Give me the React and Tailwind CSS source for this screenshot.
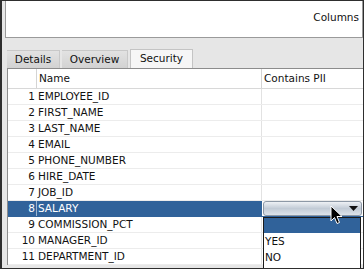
import React from 'react';

const ROWS = [
  'EMPLOYEE_ID', 'FIRST_NAME', 'LAST_NAME', 'EMAIL', 'PHONE_NUMBER', 'HIRE_DATE',
  'JOB_ID', 'SALARY', 'COMMISSION_PCT', 'MANAGER_ID', 'DEPARTMENT_ID',
];

const font = { fontFamily: '"DejaVu Sans", Verdana, sans-serif' };

function ComboBox() {
  return (
    <div className="flex-1 h-[15px] mx-[1px] rounded-[3px] border border-[#8d98a6] bg-gradient-to-b from-[#eef1f5] via-[#c2cbd6] to-[#dde3ea] flex items-center justify-end pr-[3px]">
      <svg width="9" height="5" viewBox="0 0 9 5"><path d="M0 0h9L4.5 5z" fill="#111" /></svg>
    </div>
  );
}

export default function App() {
  return (
    <div className="w-[364px] h-[269px] overflow-hidden relative bg-[#e6e6e6] border border-[#2e2e2e] border-l-2 text-[10.5px] text-[#111]" style={font}>
      {/* Columns header panel */}
      <div className="ml-[3px] h-[37px] bg-white border border-t-0 border-[#9a9a9a] flex items-center justify-end pr-[3px] pb-[2px]">
        <span>Columns</span>
      </div>

      {/* Tabs */}
      <div className="mt-[11px] h-[19px] pl-[5px] flex items-end gap-[2px]">
        <div className="w-[53px] h-[18px] bg-gradient-to-b from-[#e2e2e2] to-[#d2d2d2] border-t border-r border-[#c8c8c8] flex items-center justify-center">Details</div>
        <div className="w-[66px] h-[18px] bg-gradient-to-b from-[#e2e2e2] to-[#d2d2d2] border-t border-r border-[#c8c8c8] flex items-center justify-center">Overview</div>
        <div className="w-[63px] h-[19px] bg-[#f6f6f6] border-t border-r border-l border-[#c4c4c4] flex items-center justify-center">Security</div>
      </div>

      {/* Table */}
      <div className="ml-[5px] bg-white border-l border-t border-[#8c8c8c] relative">
        <div className="flex h-[20px] border-b border-[#d8d8d8]">
          <div className="w-[29px] border-r border-[#d4d4d4]" />
          <div className="w-[225px] border-r border-[#d4d4d4] flex items-center pl-[2px]">Name</div>
          <div className="flex-1 flex items-center pl-[2px]">Contains PII</div>
        </div>
        {ROWS.map((name, i) => {
          const sel = i === 7;
          return (
            <div key={name} className={`flex h-[16px] border-b ${sel ? 'border-[#30629a]' : 'border-[#ececec]'}`}>
              <div className={`w-[29px] flex items-center justify-end pr-[1px] border-r ${sel ? 'bg-[#30629a] text-white border-[#9db4cf]' : 'border-white'}`}>{i + 1}</div>
              <div className={`w-[225px] flex items-center pl-[1px] border-r ${sel ? 'bg-[#30629a] text-white border-[#30629a]' : 'border-[#e2e2e2]'}`}>{name}</div>
              <div className="flex-1 flex items-center">{sel && <ComboBox />}</div>
            </div>
          );
        })}

        {/* Combo popup list */}
        <div className="absolute left-[255px] top-[148px] w-[98px] h-[52px] bg-white border border-[#1a1a1a]">
          <div className="h-[15px] bg-[#30629a]" />
          <div className="h-[16px] flex items-center pl-[1px] mt-[1px]">YES</div>
          <div className="h-[16px] flex items-center pl-[1px]">NO</div>
        </div>
      </div>

      {/* Mouse cursor */}
      <svg className="absolute left-[328px] top-[204px]" width="13" height="20" viewBox="0 0 13 20">
        <path d="M1 1v15l3.5-3.5 2.5 6 2.5-1-2.5-6h5z" fill="#000" stroke="#fff" strokeWidth="1" strokeLinejoin="round" />
      </svg>
    </div>
  );
}
